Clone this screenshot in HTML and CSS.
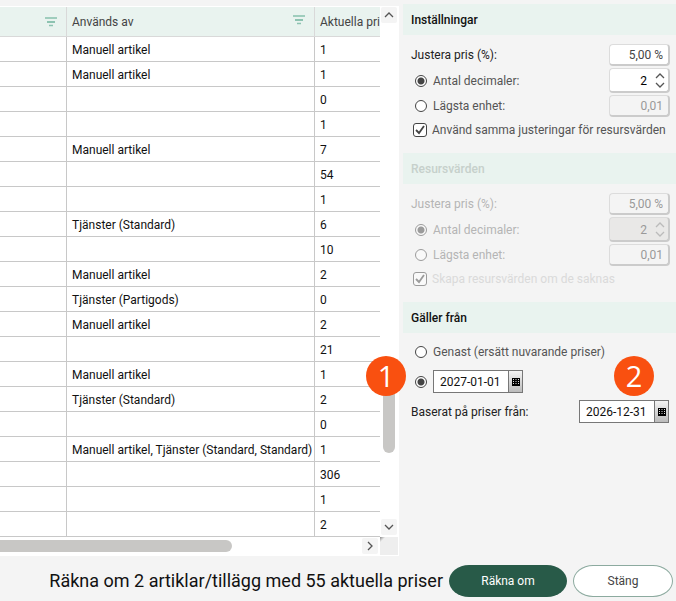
FILE: index.html
```html
<!DOCTYPE html>
<html lang="sv">
<head>
<meta charset="utf-8">
<title>Räkna om priser</title>
<link rel="stylesheet" href="styles.css">
</head>
<body>
<svg class="sprite" aria-hidden="true">
  <symbol id="filter" viewBox="0 0 12 10"><path d="M0 1h12" stroke="#9fcdbd" stroke-width="2"/><path d="M2 5h8" stroke="#8dc3b1" stroke-width="2"/><path d="M4 8.500h4" stroke="#8dc3b1" stroke-width="1.500"/></symbol>
  <symbol id="chevron" viewBox="0 0 10 6"><path d="M1 5l4-4 4 4" fill="none" stroke="currentColor" stroke-width="1.300"/></symbol>
  <symbol id="calendar" viewBox="0 0 8 8"><path d="M0 0h8v8H0z" fill="#000"/><path d="M1 1.500h6M1 3.500h6M1 5.500h6" stroke="#ddd" stroke-dasharray="1 1.500"/></symbol>
</svg>
<main class="content">
  <section class="list">
    <div class="viewport">
      <table class="grid">
        <colgroup><col class="col-a"><col class="col-b"><col></colgroup>
        <thead><tr>
          <th><svg class="filter"><use href="#filter"/></svg></th>
          <th><span>Används av</span><svg class="filter"><use href="#filter"/></svg></th>
          <th>Aktuella pri</th>
        </tr></thead>
        <tbody>
          <tr><td></td><td>Manuell artikel</td><td>1</td></tr>
          <tr><td></td><td>Manuell artikel</td><td>1</td></tr>
          <tr><td></td><td></td><td>0</td></tr>
          <tr><td></td><td></td><td>1</td></tr>
          <tr><td></td><td>Manuell artikel</td><td>7</td></tr>
          <tr><td></td><td></td><td>54</td></tr>
          <tr><td></td><td></td><td>1</td></tr>
          <tr><td></td><td>Tjänster (Standard)</td><td>6</td></tr>
          <tr><td></td><td></td><td>10</td></tr>
          <tr><td></td><td>Manuell artikel</td><td>2</td></tr>
          <tr><td></td><td>Tjänster (Partigods)</td><td>0</td></tr>
          <tr><td></td><td>Manuell artikel</td><td>2</td></tr>
          <tr><td></td><td></td><td>21</td></tr>
          <tr><td></td><td>Manuell artikel</td><td>1</td></tr>
          <tr><td></td><td>Tjänster (Standard)</td><td>2</td></tr>
          <tr><td></td><td></td><td>0</td></tr>
          <tr><td></td><td>Manuell artikel, Tjänster (Standard, Standard)</td><td>1</td></tr>
          <tr><td></td><td></td><td>306</td></tr>
          <tr><td></td><td></td><td>1</td></tr>
          <tr><td></td><td></td><td>2</td></tr>
        </tbody>
      </table>
    </div>
    <div class="vbar">
      <button class="arrow" aria-label="Uppåt"><svg class="chev"><use href="#chevron"/></svg></button>
      <div class="vtrack"><div class="vthumb"><span class="badge badge-one">1</span></div></div>
      <button class="arrow" aria-label="Nedåt"><svg class="chev down"><use href="#chevron"/></svg></button>
    </div>
    <div class="hbar">
      <div class="hthumb"></div>
      <button class="arrow" aria-label="Höger"><svg class="chev right"><use href="#chevron"/></svg></button>
    </div>
    <div class="corner"></div>
  </section>

  <form class="settings">
    <section class="group">
      <h2>Inställningar</h2>
      <div class="fields">
        <div class="row"><label class="strong" for="p1">Justera pris (%):</label><input class="box" id="p1" type="text" value="5,00 %"></div>
        <div class="row tall"><label class="choice"><input type="radio" name="mode1" checked>Antal decimaler:</label>
          <div class="box spin"><input type="text" value="2" aria-label="Antal decimaler">
            <div class="steps"><button type="button" aria-label="Öka"><svg class="chev"><use href="#chevron"/></svg></button><button type="button" aria-label="Minska"><svg class="chev down"><use href="#chevron"/></svg></button></div></div></div>
        <div class="row"><label class="choice"><input type="radio" name="mode1">Lägsta enhet:</label><input class="box" type="text" value="0,01" aria-label="Lägsta enhet" disabled></div>
        <div class="row"><label class="choice check"><input type="checkbox" checked>Använd samma justeringar för resursvärden</label></div>
      </div>
    </section>
    <section class="group off">
      <h2>Resursvärden</h2>
      <div class="fields">
        <div class="row"><label for="p2">Justera pris (%):</label><input class="box" id="p2" type="text" value="5,00 %" disabled></div>
        <div class="row tall"><label class="choice"><input type="radio" name="mode2" checked disabled>Antal decimaler:</label>
          <div class="box spin"><input type="text" value="2" aria-label="Antal decimaler" disabled>
            <div class="steps"><button type="button" aria-label="Öka" disabled><svg class="chev"><use href="#chevron"/></svg></button><button type="button" aria-label="Minska" disabled><svg class="chev down"><use href="#chevron"/></svg></button></div></div></div>
        <div class="row"><label class="choice"><input type="radio" name="mode2" disabled>Lägsta enhet:</label><input class="box" type="text" value="0,01" aria-label="Lägsta enhet" disabled></div>
        <div class="row"><label class="choice check faint"><input type="checkbox" checked disabled>Skapa resursvärden om de saknas</label></div>
      </div>
    </section>
    <section class="group">
      <h2>Gäller från</h2>
      <div class="dates">
        <div class="row"><label class="choice"><input type="radio" name="from">Genast (ersätt nuvarande priser)</label></div>
        <div class="row start"><label class="choice"><input type="radio" name="from" aria-label="Från datum" checked></label>
          <div class="date"><input type="text" value="2027-01-01" aria-label="Datum"><button type="button" aria-label="Välj datum"><svg><use href="#calendar"/></svg></button></div></div>
        <div class="row"><label class="strong" for="base">Baserat på priser från:</label>
          <div class="date"><input id="base" type="text" value="2026-12-31"><button type="button" aria-label="Välj datum"><svg><use href="#calendar"/></svg></button><span class="badge badge-two">2</span></div></div>
      </div>
    </section>
  </form>
</main>
<footer class="actions">
  <p>Räkna om 2 artiklar/tillägg med 55 aktuella priser</p>
  <button class="primary">Räkna om</button>
  <button class="secondary">Stäng</button>
</footer>
</body>
</html>
```
FILE: styles.css
```css
* { box-sizing: border-box; }
body {
  margin: 0;
  background: #f4f4f4;
  color: #111;
  font: 12px/16px Roboto, "Liberation Sans", sans-serif;
}
input, button { font: inherit; color: inherit; margin: 0; padding: 0; }
button { border: 0; background: none; }
.sprite { display: none; }

.content { display: grid; grid-template-columns: minmax(0, 1fr) 273px; column-gap: 4px; }

/* Price list */
.list {
  display: grid;
  grid-template-columns: minmax(0, 1fr) 19px;
  grid-template-rows: auto 19px;
  margin-top: 6px;
  padding-top: 1px;
  background: #fff;
}
.viewport { overflow: hidden; }
.grid { width: 100%; table-layout: fixed; border-collapse: separate; border-spacing: 0; }
.col-a { width: 67px; }
.col-b { width: 248px; }
.grid th, .grid td {
  height: 25px;
  padding: 2px 0 0 5px;
  border-right: 1px solid #c8c8c8;
  border-bottom: 1px solid #c8c8c8;
  text-align: left;
  white-space: nowrap;
}
.grid th { height: 30px; padding-top: 0; background: #e9f3ef; border-color: #d9d9d9; color: #444; font-weight: 400; }
.grid th:last-child, .grid td:last-child { border-right: 0; }
.filter { float: right; width: 12px; height: 10px; margin: 1px 9px 0 0; }

.vbar { display: flex; flex-direction: column; align-items: flex-start; padding: 0 1px 2px; }
.arrow {
  display: flex; align-items: center; justify-content: center;
  flex: none; width: 16px; height: 16px; border-radius: 2px; background: #f4f4f4; color: #555;
}
.chev { display: block; width: 10px; height: 6px; }
.down { transform: rotate(180deg); }
.right { transform: rotate(90deg); }
.vtrack { flex: 1; display: flex; align-items: flex-end; padding: 0 2px 66px; }
.vthumb { position: relative; width: 12px; height: 76px; border-radius: 6px; background: #c8c7c5; }
.hbar { display: flex; align-items: center; justify-content: space-between; padding: 0 2px 2px 0; }
.hthumb { width: 232px; height: 12px; border-radius: 0 6px 6px 0; background: #c8c7c5; }
.corner { margin: 0 1px 1px 0; background: linear-gradient(135deg, #888, #eee 4px); }

/* Settings */
.settings { padding-top: 4px; }
.group h2 { margin: 0; padding: 1px 8px 0; height: 31px; background: #e9f3ef; font-size: 12px; line-height: 30px; font-weight: 500; }
.fields { display: grid; gap: 2px; padding: 9px 6px 12px 8px; }
.row { display: flex; align-items: center; justify-content: space-between; height: 22px; color: #555; }
.tall { height: 25px; }
.strong { color: #222; }
.choice { display: flex; align-items: center; gap: 6px; padding-left: 4px; }
.check { gap: 5px; padding-left: 2px; }
.choice input { appearance: none; flex: none; display: block; width: 12px; height: 12px; border: 1px solid #444; border-radius: 50%; background: #fff; }
.choice input[type="radio"]:checked { background: radial-gradient(circle, #444 3px, #fff 4px); }
.choice input[type="checkbox"] {
  width: 14px; height: 14px; border-radius: 3px;
  background: #fff url("data:image/svg+xml,%3Csvg xmlns='http://www.w3.org/2000/svg' viewBox='0 0 12 12'%3E%3Cpath d='M2 6l3 3 5-7' fill='none' stroke='%23444' stroke-width='1.800'/%3E%3C/svg%3E");
}
.box {
  width: 61px; height: 22px; padding: 0 5px;
  border: 1px solid #dcdcdc; border-right: 2px solid #cbcbcb; border-bottom: 2px solid #cbcbcb;
  border-radius: 4px; background: #fff; text-align: right; color: #444;
}
.box:disabled { background: #f4f4f4; color: #999; }
.spin { display: flex; align-items: center; justify-content: flex-end; gap: 8px; height: 25px; padding: 0 3px; color: #000; }
.spin input { width: 20px; height: 20px; border: 0; padding-top: 2px; background: none; text-align: right; }
.steps { display: flex; flex-direction: column; gap: 3px; color: #555; }
.steps button { display: block; }
.off h2 { color: #c6d0cb; }
.off .row { color: #b5b5b5; }
.off .faint { color: #dadada; }
.off .choice input { opacity: .5; }
.off .spin { background: #e9e8e7; color: #999; }
.off .steps { color: #bbb; }

.dates { display: grid; gap: 7px; padding: 7px 7px 0 8px; }
.dates .row { height: 23px; }
.dates .start { justify-content: flex-start; gap: 6px; }
.date { position: relative; display: flex; width: 90px; height: 23px; border: 1px solid #777; background: #fff; }
.date input { width: 74px; border: 0; padding-left: 6px; background: none; color: #111; }
.date button { display: flex; align-items: center; justify-content: center; width: 14px; border-left: 1px solid #777; background: linear-gradient(#f4f4f4, #ddd 40%, #bbb); }
.date svg { width: 8px; height: 8px; }

.badge {
  position: absolute; width: 40px; height: 40px; border-radius: 50%;
  background: #f95010; color: #fff; font: 29px/40px "Open Sans", "Noto Sans", sans-serif; text-align: center;
}
.badge-one { left: -17px; top: -21px; }
.badge-two { right: 14px; bottom: 26px; }

/* Actions */
.actions { display: flex; align-items: center; justify-content: flex-end; gap: 6px; padding: 9px 3px 4px; }
.actions p { margin: 0; font-size: 18px; line-height: 24px; }
.actions button { height: 32px; border-radius: 20px / 16px; }
.primary { width: 118px; background: #285a48; color: #fff; }
.secondary { width: 100px; border: 1px solid #8caa9f; background: #fff; color: #444; }
```
